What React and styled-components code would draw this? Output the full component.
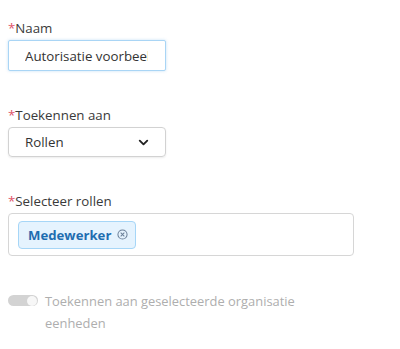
import styled, { createGlobalStyle } from "styled-components"
import { ChevronDown } from "lucide-react"

const GlobalStyle = createGlobalStyle`
  html, body {
    margin: 0;
    padding: 0;
    background: #ffffff;
  }
  body {
    font-family: "Open Sans", "Noto Sans", sans-serif;
    color: #333333;
  }
`

const Page = styled.div`
  width: 400px;
  height: 349px;
  padding: 18px 8px 0 8px;
  box-sizing: border-box;
`

const Field = styled.div`
  display: flex;
  flex-direction: column;
  margin-bottom: ${p => p.$gap || 34}px;
`

const Label = styled.label`
  font-size: 13.3px;
  line-height: 20px;
  color: #3a3a3a;
  margin-bottom: 2px;

  span {
    color: #e0556a;
  }
`

const TextInput = styled.input`
  width: 158px;
  height: 31px;
  box-sizing: border-box;
  padding: 0 17px 0 16px;
  border: 1px solid #a9d5f5;
  border-radius: 2px;
  box-shadow: 0 0 3px rgba(120, 185, 235, 0.45);
  font-family: inherit;
  font-size: 13.3px;
  color: #333333;
  outline: none;
  background: #ffffff;
`

const Select = styled.div`
  width: 158px;
  height: 30px;
  box-sizing: border-box;
  padding: 0 14px 0 16px;
  border: 1px solid #d2d2d2;
  border-radius: 4px;
  box-shadow: 0 1px 2px rgba(0, 0, 0, 0.08);
  display: flex;
  align-items: center;
  justify-content: space-between;
  font-size: 13.3px;
  color: #333333;
`

const MultiBox = styled.div`
  width: 346px;
  height: 43px;
  box-sizing: border-box;
  padding: 0 9px;
  border: 1px solid #d6d6d6;
  border-radius: 4px;
  display: flex;
  align-items: center;
`

const Tag = styled.div`
  height: 28px;
  box-sizing: border-box;
  padding: 0 7px 0 9px;
  background: #e5f3fe;
  border: 1px solid #a6d6f7;
  border-radius: 4px;
  display: flex;
  align-items: center;
  gap: 6px;
  font-size: 13.2px;
  font-weight: 700;
  color: #1f6db0;
`

const ToggleRow = styled.div`
  display: flex;
  align-items: flex-start;
  gap: 7px;
`

const Track = styled.div`
  flex: none;
  width: 30px;
  height: 11px;
  margin-top: 5px;
  border-radius: 6px;
  background: #d3d3d3;
  position: relative;
`

const Knob = styled.div`
  position: absolute;
  right: 1px;
  top: 0.5px;
  width: 10px;
  height: 10px;
  border-radius: 50%;
  background: #f7f7f7;
`

const ToggleText = styled.div`
  width: 268px;
  font-size: 12.9px;
  line-height: 22px;
  color: #aeaeae;
`

function ClearIcon() {
  return (
    <svg width="11" height="11" viewBox="0 0 12 12" fill="none" stroke="#6a7f98" strokeWidth="1.1">
      <circle cx="6" cy="6" r="5" />
      <path d="M4 4 L8 8 M8 4 L4 8" />
    </svg>
  )
}

export default function App() {
  return (
    <Page>
      <GlobalStyle />
      <Field>
        <Label><span>*</span>Naam</Label>
        <TextInput value="Autorisatie voorbeeld" readOnly />
      </Field>

      <Field>
        <Label><span>*</span>Toekennen aan</Label>
        <Select>
          Rollen
          <ChevronDown size={15} strokeWidth={3} color="#222" />
        </Select>
      </Field>

      <Field $gap={34}>
        <Label><span>*</span>Selecteer rollen</Label>
        <MultiBox>
          <Tag>
            Medewerker
            <ClearIcon />
          </Tag>
        </MultiBox>
      </Field>

      <ToggleRow>
        <Track><Knob /></Track>
        <ToggleText>Toekennen aan geselecteerde organisatie eenheden</ToggleText>
      </ToggleRow>
    </Page>
  )
}
